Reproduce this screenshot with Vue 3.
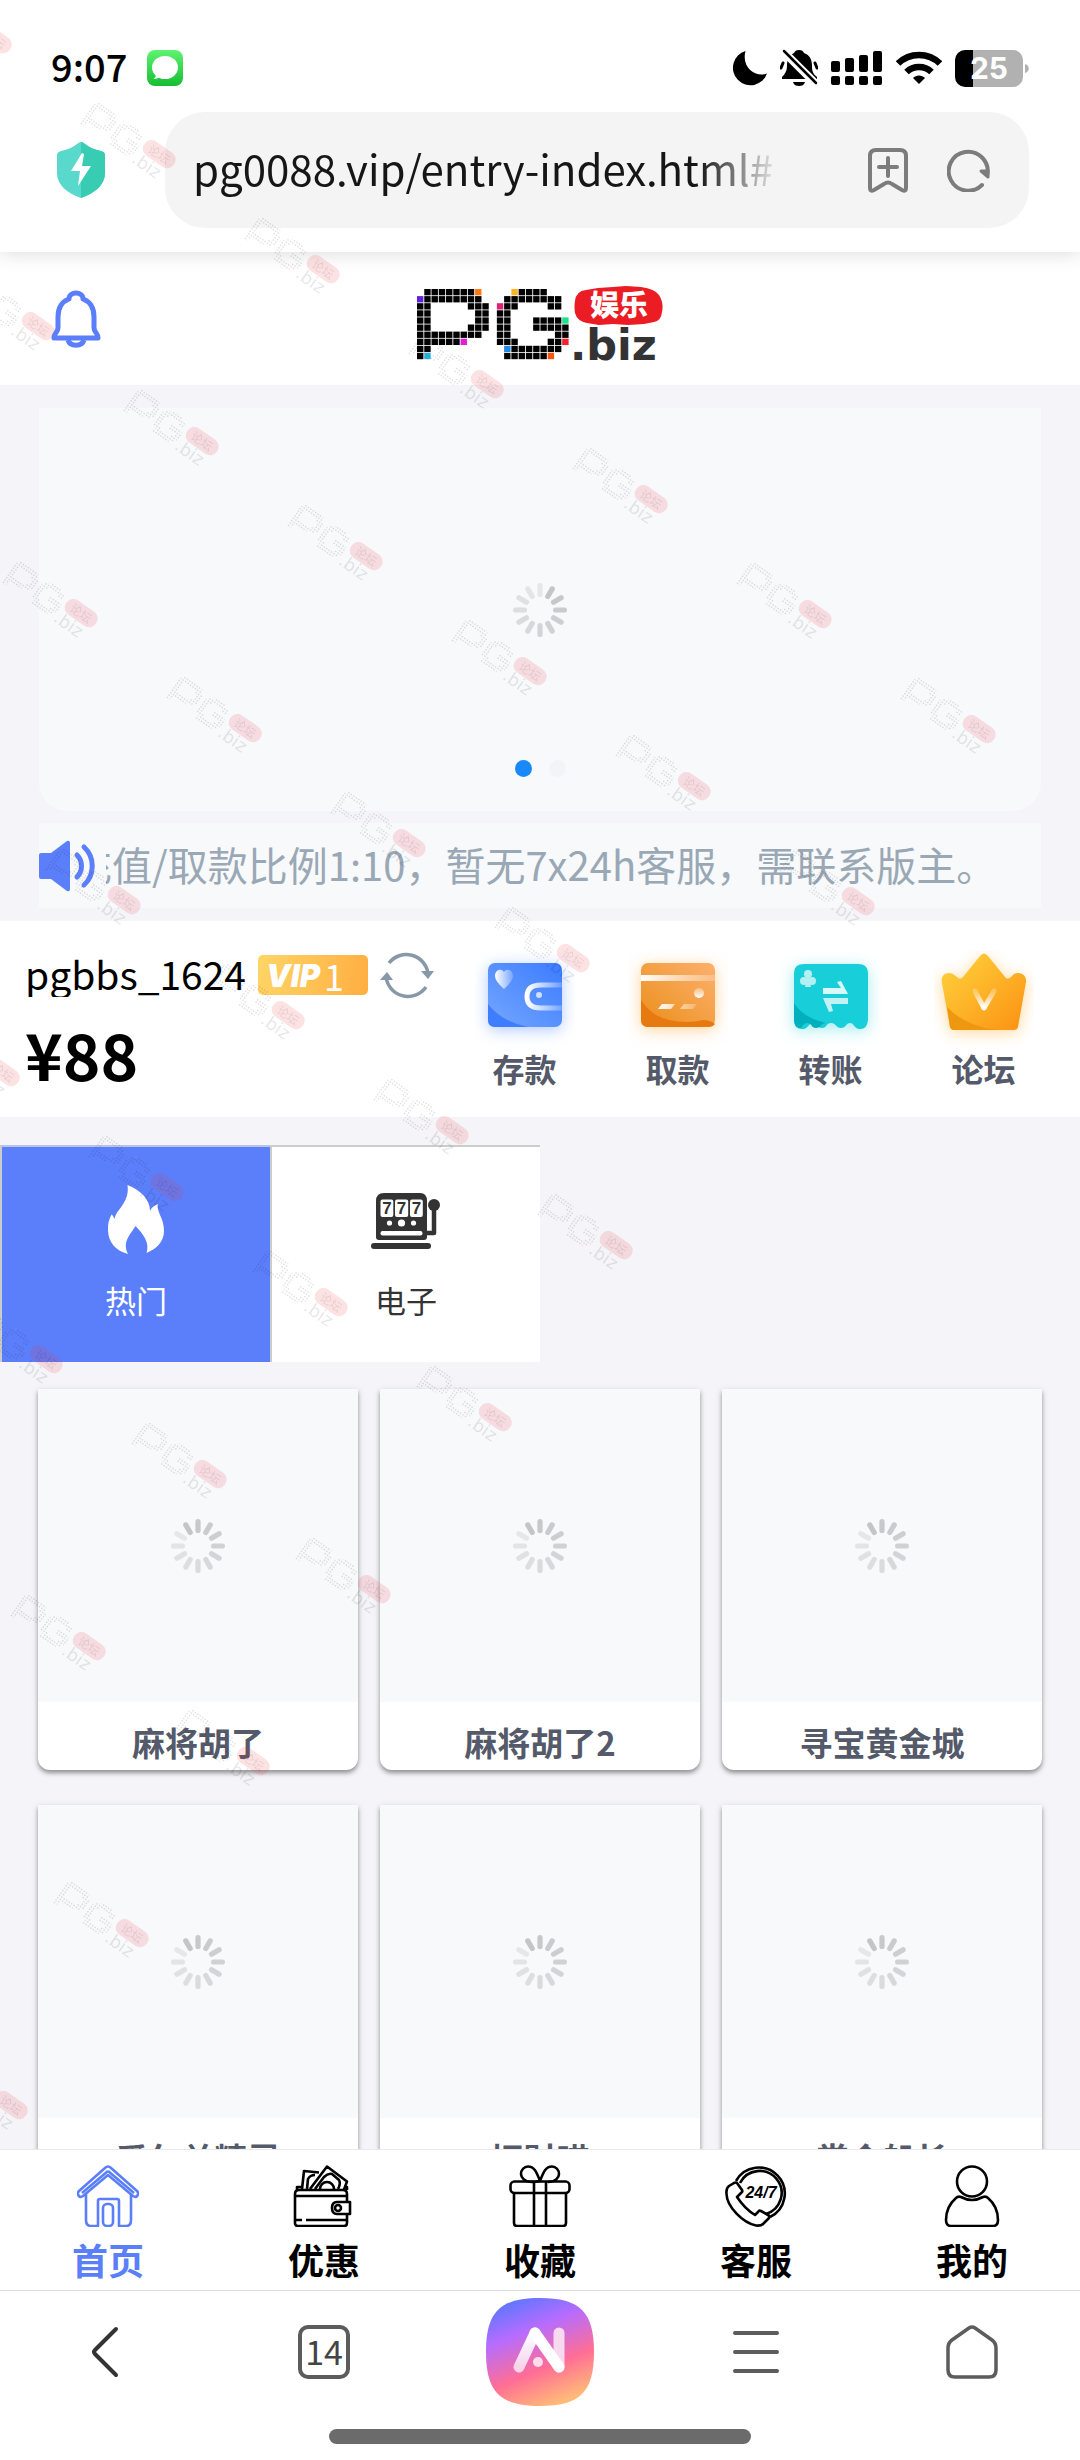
<script setup>
import { computed, ref } from "vue";

const url = ref("pg0088.vip/entry-index.html#");
const notice = "充值/取款比例1:10，暂无7x24h客服，需联系版主。";
const activeTab = ref("hot");
const activeNav = ref("home");

const actions = [
  { key: "deposit", label: "存款" },
  { key: "withdraw", label: "取款" },
  { key: "transfer", label: "转账" },
  { key: "forum", label: "论坛" },
];

const tabs = [
  { key: "hot", label: "热门" },
  { key: "slot", label: "电子" },
];

const games = ["麻将胡了", "麻将胡了2", "寻宝黄金城", "爱尔兰精灵", "招财喵", "赏金船长"];

const navs = [
  { key: "home", label: "首页" },
  { key: "promo", label: "优惠" },
  { key: "favorite", label: "收藏" },
  { key: "service", label: "客服" },
  { key: "mine", label: "我的" },
];

// logo 像素点阵
const logoRows = [
  ".kkkkkkko....ykkkk...",
  "ukkkkkkkk...kkkkkkkk.",
  "kk.....kkk.pkk....kk.",
  "kk......kk.kk........",
  "kk......kk.kk...kkkkg",
  "kk.....kkk.kk...kkkkk",
  "kkkkkkkkk..kk......kk",
  "kkkkkkm....kkk....kkr",
  "kk..........bkkkkkkk.",
  "kc..........kkkkkkv..",
];
const palette = {
  k: "#000",
  o: "#ff7a12",
  y: "#fbb425",
  u: "#5f22dd",
  p: "#dc2374",
  g: "#1fe08c",
  m: "#dd22d2",
  r: "#f3202f",
  b: "#2287e0",
  c: "#25b4dc",
  v: "#f9550f",
};
const cells = computed(() =>
  logoRows.flatMap((row, y) =>
    [...row]
      .map((c, x) => ({ x: x * 7.26, y: 3 + y * 7.1, fill: palette[c] }))
      .filter((c) => c.fill),
  ),
);

// 水印行：[列起, 列止, 行]
const markRows = [
  [-2, 4, -1],
  [-1, 4, 0],
  [0, 3, 1],
  [1, 4, 2],
  [1, 4, 3],
  [2, 4, 4],
  [3, 4, 5],
  [4, 4, 6],
  [4, 4, 7],
];
const marks = markRows.flatMap(([from, to, j]) =>
  Array.from({ length: to - from + 1 }, (_, n) => ({
    x: 140 + (from + n) * 164 - j * 121,
    y: 387 + (from + n) * 115 + j * 172,
  })),
);

function bars(start) {
  return Array.from({ length: 12 }, (_, i) => ({
    angle: start + i * 30,
    opacity: 1 - i * 0.06,
  }));
}
const bannerBars = bars(30);
const gameBars = bars(-30);
</script>

<template>
  <div class="page">
    <div class="browser-top">
      <div class="status">
        <div class="status-left">
          <span class="time">9:07</span>
          <svg width="36" height="36" viewBox="0 0 36 36">
            <defs>
              <linearGradient id="msg" x1="0" y1="0" x2="0" y2="1">
                <stop offset="0" stop-color="#5ff372" />
                <stop offset="1" stop-color="#16bd31" />
              </linearGradient>
            </defs>
            <rect width="36" height="36" rx="8" fill="url(#msg)" />
            <ellipse cx="18" cy="17.500" rx="13" ry="11.500" fill="#fff" />
            <path d="M9 24c0 3-1 4-3 5 4 0 6-1 8-3z" fill="#fff" />
          </svg>
        </div>
        <div class="status-right">
          <svg width="35" height="36" viewBox="0 0 35 36">
            <path d="M13.500 1A17.500 17.500 0 1 0 35 23.500C24 28 9 18 13.500 1z" />
          </svg>
          <svg width="38" height="38" viewBox="0 0 38 38">
            <path d="M19 1c3 0 4 1 5 3 6 2 8 7 8 13 0 5 1 8 5 11v2H2v-2c3-3 5-6 5-11 0-6 2-11 7-13 1-2 2-3 5-3z" />
            <path d="M13 33h12c-1 3-3 4-6 4s-5-1-6-4z" />
            <path d="M3 14l-2 5M35 14l2 5" stroke="#000" stroke-width="3" stroke-linecap="round" />
            <path d="M2 1l34 34" stroke="#fff" stroke-width="8" />
            <path d="M4 2l32 32" stroke="#000" stroke-width="2.500" stroke-linecap="round" />
          </svg>
          <svg width="52" height="36" viewBox="0 0 52 36">
            <rect x="0" y="11" width="9" height="11" rx="2" />
            <rect x="14" y="8" width="9" height="14" rx="2" />
            <rect x="28" y="5" width="9" height="17" rx="2" />
            <rect x="42" y="1" width="9" height="21" rx="2" />
            <rect v-for="x in [0, 14, 28, 42]" :key="x" :x="x" y="26" width="9" height="9" rx="2" />
          </svg>
          <svg width="46" height="36" viewBox="0 0 46 36">
            <g fill="none" stroke="#000" stroke-width="6.500">
              <path d="M2 13.500a30 30 0 0 1 42 0" />
              <path d="M10.500 22a18 18 0 0 1 25 0" />
            </g>
            <path d="M23 34l-6-6c3-3.500 9-3.500 12 0z" />
          </svg>
          <svg width="74" height="37" viewBox="0 0 74 37">
            <path d="M10 0h48a10 10 0 0 1 10 10v17a10 10 0 0 1-10 10H18V0z" fill="#b1b1b1" />
            <path d="M10 0h8v37h-8A10 10 0 0 1 0 27V10A10 10 0 0 1 10 0z" />
            <path d="M70 14c5 1 5 8 0 9z" fill="#b1b1b1" />
            <text class="battery-text" x="34" y="29" text-anchor="middle">25</text>
          </svg>
        </div>
      </div>
      <div class="address">
        <button type="button" class="shield" aria-label="安全">
          <svg width="48" height="56" viewBox="0 0 48 56">
            <path d="M24 0q2 0 4 2 6 5 16 7 4 1 4 4v18c0 12-10 20-24 25C10 51 0 43 0 31V13q0-3 4-4 10-2 16-7 2-2 4-2z" fill="#59d9cb" />
            <path d="M24 0q2 0 4 2 6 5 16 7 4 1 4 4v18c0 12-10 20-24 25z" fill="#38cdb2" />
            <path d="M25 11L14 29h9l-2 15 13-20h-9l2-12z" fill="#fff" />
          </svg>
        </button>
        <div class="url-bar">
          <input v-model="url" class="url" type="text" aria-label="网址" />
          <button type="button" aria-label="收藏网址">
            <svg width="42" height="46" viewBox="0 0 42 46" class="line-gray">
              <path d="M3 41V9q0-6 6-6h24q6 0 6 6v32q0 4-4 2l-10-6q-4-3-8 0l-10 6q-4 2-4-2zM21 11v18M12 20h18" />
            </svg>
          </button>
          <button type="button" aria-label="刷新">
            <svg width="44" height="44" viewBox="0 0 44 44" class="line-gray">
              <path d="M35 37a19.500 19.500 0 1 1 5.500-11" />
              <path d="M34 23h7v6z" fill="#7c7c7c" stroke-linejoin="round" stroke-width="3" />
            </svg>
          </button>
        </div>
      </div>
    </div>

    <main class="content">
      <header class="header">
        <button type="button" class="bell" aria-label="消息">
          <svg width="50" height="58" viewBox="0 0 50 58" fill="none" stroke="#5b7ffb" stroke-width="5" stroke-linejoin="round">
            <path d="M18 9c0-8 14-8 14 0 8 3 11 9 11 18v11c0 4 4 5 4 10H3c0-5 4-6 4-10V27C7 18 10 12 18 9z" />
            <path d="M17 50c2 7 14 7 16 0" />
          </svg>
        </button>
        <svg class="logo" width="246" height="76" viewBox="0 0 246 76" role="img" aria-label="PG娱乐.biz">
          <rect v-for="(c, i) in cells" :key="i" :x="c.x" :y="c.y" width="6.400" height="6.300" :fill="c.fill" />
          <path
            d="M158 15q1-10 11-11l12-2 15-1 13-1 15 1q14 2 18 8 5 8 3 17-1 9-8 10l-10 2-16 1-15-1-14 1-12-2q-10-2-12-10-1-6 0-12z"
            fill="#ec1c24"
          />
          <text class="logo-seal" x="202" y="30" text-anchor="middle">娱乐</text>
          <text class="logo-domain" x="153" y="74">.biz</text>
        </svg>
      </header>

      <section class="banner">
        <svg width="54" height="54" viewBox="-27 -27 54 54" class="spinner">
          <rect v-for="b in bannerBars" :key="b.angle" x="-2.600" y="-27" width="5.200" height="14" rx="2.600" :opacity="b.opacity" :transform="`rotate(${b.angle})`" />
        </svg>
        <div class="dots"><i class="on"></i><i></i></div>
      </section>

      <div class="notice">
        <svg width="56" height="52" viewBox="0 0 56 52">
          <path d="M2 13h10L28 1q3-1 3 2v46q0 3-3 2L12 39H2q-2 0-2-2V15q0-2 2-2z" fill="#5b7ffb" />
          <g fill="none" stroke="#5b7ffb" stroke-width="5" stroke-linecap="round">
            <path d="M38 15c6 6 6 16 0 22" />
            <path d="M45 7c11 10 11 28 0 38" />
          </g>
        </svg>
        <p class="notice-text">{{ notice }}</p>
      </div>

      <section class="wallet">
        <div class="account">
          <div class="account-row">
            <span class="name">pgbbs_1624</span>
            <span class="vip"><b>VIP</b>1</span>
            <button type="button" class="sync" aria-label="刷新余额">
              <svg width="54" height="52" viewBox="0 0 54 52">
                <g fill="none" stroke="#8798a8" stroke-width="3.500">
                  <path d="M9 14a22 22 0 0 1 39 10" />
                  <path d="M46 38A22 22 0 0 1 6 27" />
                </g>
                <path d="M41 22h13l-6 8zM0 31h13L7 23z" fill="#8798a8" />
              </svg>
            </button>
          </div>
          <div class="balance">¥88</div>
        </div>
        <div class="actions">
          <button v-for="a in actions" :key="a.key" type="button" class="action">
            <svg v-if="a.key === 'deposit'" width="100" height="100" viewBox="0 0 100 100">
              <defs>
                <linearGradient id="blue" x1="0" y1="1" x2="1" y2="0">
                  <stop offset="0" stop-color="#75a7ff" />
                  <stop offset="1" stop-color="#3b7bff" />
                </linearGradient>
                <linearGradient id="shine">
                  <stop offset="0" stop-color="#fff" />
                  <stop offset="1" stop-color="#fff" stop-opacity="0.2" />
                </linearGradient>
                <linearGradient id="shineUp" x1="0" y1="1" x2="0" y2="0">
                  <stop offset="0" stop-color="#fff" />
                  <stop offset="1" stop-color="#fff" stop-opacity="0.25" />
                </linearGradient>
              </defs>
              <g class="glow-blue">
                <rect x="13" y="13" width="74" height="64" rx="7" fill="url(#blue)" />
              </g>
              <path d="M13 54q14 18 40 23H20q-7 0-7-7z" fill="#3f7dff" />
              <path d="M87 35H66q-14 0-14 11.500T66 58h21" fill="none" stroke="url(#shine)" stroke-width="5" />
              <circle cx="64" cy="45" r="3" fill="#cfe0ff" />
              <path d="M29 39q-9-8-9-13c0-7 7-8 9-4 2-4 9-3 9 4q0 5-9 13z" fill="url(#shine)" />
            </svg>
            <svg v-else-if="a.key === 'withdraw'" width="100" height="100" viewBox="0 0 100 100">
              <defs>
                <linearGradient id="orange" x1="0" y1="1" x2="1" y2="0">
                  <stop offset="0" stop-color="#ea8f1a" />
                  <stop offset="1" stop-color="#fdb06e" />
                </linearGradient>
              </defs>
              <g class="glow-orange">
                <rect x="13" y="13" width="74" height="64" rx="7" fill="url(#orange)" />
              </g>
              <path d="M13 50q10 16 28 20t34 0q7 0 12 4-2 3-7 3H20q-7 0-7-7z" fill="#e67a10" />
              <path d="M13 25h74v6H13z" fill="url(#shine)" />
              <circle cx="71" cy="43" r="5" fill="url(#shineUp)" />
              <path d="M34 54h13l-4 5H30zM56 54h13l-4 5H52z" fill="url(#shine)" />
            </svg>
            <svg v-else-if="a.key === 'transfer'" width="100" height="100" viewBox="0 0 100 100">
              <g class="glow-cyan">
                <path
                  d="M23 14h54q10 0 10 9v47q-1 10-9 9c-5-1-5-6-9-6s-4 5-9 5-5-5-10-5-4 5-9 5-5-5-9-5-5 5-9 6q-10 1-10-9V23q0-9 10-9z"
                  fill="#18cfd9"
                />
              </g>
              <path d="M13 53q8 14 32 20c-5 0-5 5-10 5s-4-5-9-5q-3 0-6 5-6 1-7-8z" fill="#02b0bd" />
              <path d="M42 38h18l-4-6 4-1 7 13H42z" fill="#d9f8fa" />
              <path d="M67 48H42l6 14 4-1-2-7h17z" fill="#c2f2f5" />
              <g fill="#b4f0f3">
                <circle cx="27" cy="24" r="4" />
                <circle cx="23" cy="31" r="4" />
                <circle cx="31" cy="31" r="4" />
                <path d="M26 27h2l2 10h-6z" />
              </g>
            </svg>
            <svg v-else width="100" height="100" viewBox="0 0 100 100">
              <defs>
                <linearGradient id="gold" x1="0" y1="0" x2="1" y2="1">
                  <stop offset="0" stop-color="#ffd43d" />
                  <stop offset="1" stop-color="#fc9113" />
                </linearGradient>
              </defs>
              <g class="glow-gold">
                <path
                  d="M46 6q4-5 8 0l17 21q2 3 6 0l3-3c6-3 13 1 12 8l-8 45q-1 3-4 3H20q-3 0-4-3L8 33c-2-8 5-12 11-9l4 3q3 3 6 0z"
                  fill="url(#gold)"
                />
              </g>
              <path d="M13 57q18 19 50 23H20q-3 0-4-3z" fill="#ee980f" />
              <path d="M41 41l9 17 10-17" fill="none" stroke="url(#shineUp)" stroke-width="5" stroke-linecap="round" stroke-linejoin="round" />
            </svg>
            <span>{{ a.label }}</span>
          </button>
        </div>
      </section>

      <div class="tabs">
        <button
          v-for="t in tabs"
          :key="t.key"
          type="button"
          class="tab"
          :class="{ active: activeTab === t.key }"
          @click="activeTab = t.key"
        >
          <svg v-if="t.key === 'hot'" width="56" height="70" viewBox="0 0 56 70">
            <path
              d="M19.500 0C32 5 42 14 42 25.700q2-4 7.700-6.700c-1 9 6.300 14 6.300 27 0 11-8 18-17.400 22C42 57 35 49 27.500 41 22 50 14 57 20 69 8 66 0 57 0 45c0-7 1-11 3.800-15.700 1 2 2.500 3 2.700 5C8 24 22 18 19.500 0z"
              fill="currentColor"
            />
          </svg>
          <svg v-else width="70" height="70" viewBox="0 -8 70 70" fill="currentColor">
            <path d="M13 0h36q7 0 7 8v36q0 3-3 3H8q-3 0-3-3V8q0-8 8-8z" />
            <rect x="0" y="50" width="60" height="6" rx="3" />
            <circle cx="63" cy="12" r="6" />
            <path d="M63 14v26h-8" fill="none" stroke="currentColor" stroke-width="4.500" stroke-linejoin="round" />
            <g fill="#fff">
              <rect x="9.500" y="6.500" width="12.800" height="17.500" rx="2" />
              <rect x="24" y="6.500" width="13.200" height="17.500" rx="2" />
              <rect x="39" y="6.500" width="12.800" height="17.500" rx="2" />
              <circle cx="18.500" cy="30" r="2.600" />
              <circle cx="30.500" cy="30" r="3.600" />
              <circle cx="42.500" cy="30" r="2.600" />
              <rect x="9.500" y="38" width="42" height="4.500" rx="2" />
            </g>
            <g class="slot-digit" text-anchor="middle">
              <text x="16" y="21">7</text>
              <text x="30.600" y="21">7</text>
              <text x="45.400" y="21">7</text>
            </g>
          </svg>
          <span>{{ t.label }}</span>
        </button>
      </div>

      <section class="games">
        <a v-for="g in games" :key="g" href="#" class="game">
          <span class="cover">
            <svg width="54" height="54" viewBox="-27 -27 54 54" class="spinner">
              <rect v-for="b in gameBars" :key="b.angle" x="-2.600" y="-27" width="5.200" height="14" rx="2.600" :opacity="b.opacity" :transform="`rotate(${b.angle})`" />
            </svg>
          </span>
          <span class="game-name">{{ g }}</span>
        </a>
      </section>
    </main>

    <nav class="navbar">
      <a
        v-for="n in navs"
        :key="n.key"
        href="#"
        class="nav"
        :class="{ active: activeNav === n.key }"
        @click.prevent="activeNav = n.key"
      >
        <svg width="62" height="62" viewBox="0 0 62 62" fill="none" stroke="currentColor" stroke-width="2.600" stroke-linejoin="round">
          <g v-if="n.key === 'home'">
            <path d="M31 1.500q1.500 0 3 1.500l26 23q2 2 .5 4.500t-4.500.5L31 10 6 31q-3 2-4.500-.5T2 26L28 3q1.500-1.500 3-1.500z" />
            <path d="M31 6L5 28M31 6l26 22" />
            <path d="M9 29v26q0 6 5 6h7V36q0-2 2-2h17q2 0 2 2v25h7q5 0 5-6V29" />
            <rect x="26" y="39" width="10" height="22" rx="4" />
          </g>
          <g v-else-if="n.key === 'promo'">
            <path d="M6 25h44q4 0 4 4v29q0 3-3 3H5q-3 0-3-3V29q0-4 4-4zM2 31h52M2 55h7M13 55h41M4 25v-3h5M54 25v-3h-3" />
            <path d="M9 24l2-18 15 1.500M14 24l1-10q2-4 7-4M17 24L34 1.500l20 15-3 8M22 24l9-12q4-4 8-3l7 6q2 4-1 9" />
            <path d="M27 24a7 7 0 0 1 14 0" />
            <path d="M57 37H44q-5 0-5 6t5 6h13z" fill="#fff" />
            <circle cx="45" cy="43" r="3" />
          </g>
          <g v-else-if="n.key === 'favorite'">
            <rect x="1.500" y="16.500" width="59" height="11.500" rx="4" />
            <path d="M5 28v30q0 3 3 3h46q3 0 3-3V28M25 17v44M37 17v44" />
            <path d="M31 16c-3 0-4 1-8 1-8 0-11-5-11-8 0-4 3-7.500 7-7.500 7 0 9 7 12 14.500 3-7.500 5-14.500 12-14.500 4 0 7 3.500 7 7.500 0 3-3 8-11 8" />
          </g>
          <g v-else-if="n.key === 'service'">
            <path d="M11 16A26 26 0 1 1 45 52" />
            <path d="M15 18A22 22 0 1 1 41 49" />
            <path d="M9 18l-5 3q-3 2-2.500 8C2 42 18 58 31 60.500q5 .5 7-1.500l6-6q1-2-1-3l-7-4q-2-1-3 1l-3 3Q20 44 12 32l4-4q2-1 1-3l-5-7q-1-1-3 0z" fill="#fff" />
            <text class="service-text" x="36" y="33" text-anchor="middle" fill="currentColor" stroke="none">24/7</text>
          </g>
          <g v-else>
            <circle cx="31" cy="16.500" r="15" />
            <path d="M15 33q2-2 5-1 11 6 22 0 3-1 5 1c7 6 10 15 10 22q0 6-5 6H10q-5 0-5-6c0-7 3-16 10-22z" />
          </g>
        </svg>
        <span>{{ n.label }}</span>
      </a>
    </nav>

    <footer class="browser-bottom">
      <div class="tools">
        <button type="button" aria-label="返回">
          <svg width="50" height="54" viewBox="0 0 50 54" fill="none" stroke="#333" stroke-width="4" stroke-linecap="round" stroke-linejoin="round">
            <path d="M33 4L12 25q-2 2 0 4l21 21" />
          </svg>
        </button>
        <button type="button" class="tab-count"><span>14</span></button>
        <button type="button" aria-label="AI">
          <svg width="108" height="108" viewBox="0 0 108 108">
            <defs>
              <linearGradient id="ai" x1="0.200" y1="0" x2="0.600" y2="1">
                <stop offset="0" stop-color="#5578ff" />
                <stop offset="0.320" stop-color="#b66cff" />
                <stop offset="0.680" stop-color="#ff6e95" />
                <stop offset="1" stop-color="#ffba78" />
              </linearGradient>
              <linearGradient id="aiLeg" x1="0" y1="0" x2="0" y2="1">
                <stop offset="0" stop-color="#fff" />
                <stop offset="1" stop-color="#fff" stop-opacity="0.700" />
              </linearGradient>
            </defs>
            <path d="M54 0C94 0 108 14 108 54s-14 54-54 54S0 94 0 54 14 0 54 0z" fill="url(#ai)" />
            <g fill="none" stroke-width="11" stroke-linecap="round">
              <path d="M49 35L33 69" stroke="url(#aiLeg)" />
              <path d="M73 35v34" stroke="#f8daf0" />
              <path d="M49 35l24 34" stroke="#fff" />
            </g>
            <circle cx="52" cy="64" r="5" fill="#ffdcea" />
          </svg>
        </button>
        <button type="button" aria-label="菜单">
          <svg width="50" height="54" viewBox="0 0 50 54" stroke="#5c5c5c" stroke-width="4" stroke-linecap="round">
            <path d="M4 8h42M4 27h42M4 46h42" />
          </svg>
        </button>
        <button type="button" aria-label="主页">
          <svg width="52" height="54" viewBox="0 0 52 54" fill="none" stroke="#5c5c5c" stroke-width="3.500" stroke-linejoin="round">
            <path d="M23 3q3-2 6 0l17 12q4 3 4 8v22q0 7-7 7H9q-7 0-7-7V23q0-5 4-8z" />
          </svg>
        </button>
      </div>
      <div class="home-bar"></div>
    </footer>

    <svg class="watermark" width="100%" height="100%" aria-hidden="true">
      <g v-for="(m, i) in marks" :key="i" :transform="`translate(${m.x} ${m.y}) rotate(35) scale(0.41)`">
        <g opacity="0.120">
          <rect v-for="(c, k) in cells" :key="k" :x="c.x" :y="c.y" width="3.500" height="3.500" :fill="c.fill" />
        </g>
        <rect x="156" y="0" width="88" height="42" rx="20" fill="#f03040" opacity="0.140" />
        <g opacity="0.090">
          <text class="logo-seal mark-seal" x="200" y="33" text-anchor="middle">论坛</text>
          <text class="logo-domain mark-domain" x="153" y="76">.biz</text>
        </g>
      </g>
    </svg>
  </div>
</template>

<style>
body {
  margin: 0;
}
</style>

<style scoped>
.page {
  position: relative;
  display: flex;
  flex-direction: column;
  height: 100vh;
  overflow: hidden;
  background: #f4f4f9;
  color: #000;
  font-family: "Noto Sans CJK SC", "Noto Sans", sans-serif;
}
button {
  display: flex;
  align-items: center;
  justify-content: center;
  padding: 0;
  border: 0;
  background: none;
  color: inherit;
  font: inherit;
}
a {
  color: inherit;
  text-decoration: none;
}
svg {
  display: block;
  flex-shrink: 0;
}

/* 浏览器顶部 */
.browser-top {
  position: relative;
  z-index: 1;
  flex-shrink: 0;
  padding-bottom: 24px;
  background: #fff;
  box-shadow: 0 0 20px rgba(0, 0, 0, 0.16);
}
.status {
  display: flex;
  align-items: center;
  justify-content: space-between;
  box-sizing: border-box;
  height: 112px;
  padding: 24px 51px 0 51px;
}
.status-left {
  display: flex;
  align-items: center;
  gap: 20px;
}
.time {
  font-size: 38px;
  line-height: 40px;
  padding-bottom: 4px;
  font-weight: 500;
}
.status-right {
  display: flex;
  align-items: center;
  gap: 13px;
}
.battery-text {
  fill: #fff;
  font: bold 30px Inter, sans-serif;
}
.address {
  display: flex;
  align-items: center;
  padding-right: 51px;
}
.shield {
  width: 165px;
  padding-right: 3px;
}
.url-bar {
  display: flex;
  flex: 1;
  align-items: center;
  gap: 38px;
  min-width: 0;
  height: 116px;
  padding: 0 38px 0 28px;
  border-radius: 40px;
  background: #f4f4f4;
}
.url {
  flex: 1;
  min-width: 0;
  height: 64px;
  margin-right: 48px;
  padding: 0 0 6px;
  border: 0;
  outline: 0;
  background: none;
  color: #161616;
  font: 42px "Noto Sans CJK SC", sans-serif;
  -webkit-mask-image: linear-gradient(90deg, #000 86%, transparent);
  mask-image: linear-gradient(90deg, #000 86%, transparent);
}
.line-gray {
  fill: none;
  stroke: #7c7c7c;
  stroke-width: 4;
  stroke-linecap: round;
  stroke-linejoin: round;
}

/* 内容 */
.content {
  flex: 1;
  min-height: 0;
  overflow: hidden;
}
.header {
  display: grid;
  grid-template-columns: 1fr auto 1fr;
  align-items: center;
  height: 133px;
  background: #fff;
}
.bell {
  justify-self: start;
  margin-left: 51px;
}
.logo {
  margin-top: 10px;
}
.logo-seal {
  fill: #fff;
  font-size: 29px;
  font-weight: 900;
}
.logo-domain {
  fill: #333;
  font: bold 43px "DejaVu Sans", sans-serif;
}
.banner {
  position: relative;
  display: flex;
  align-items: center;
  justify-content: center;
  height: 403px;
  margin: 23px 39px 12px;
  border-radius: 0 0 28px 28px;
  background: #f7f9fb;
}
.spinner {
  fill: #c3c5c7;
}
.dots {
  position: absolute;
  bottom: 34px;
  left: 0;
  right: 0;
  display: flex;
  justify-content: center;
  gap: 17px;
}
.dots i {
  width: 17px;
  height: 17px;
  border-radius: 50%;
  background: #f3f4f8;
}
.dots .on {
  background: #1989fa;
}
.notice {
  display: flex;
  align-items: center;
  gap: 11px;
  height: 85px;
  margin: 0 39px 13px;
  background: #f7f9fb;
}
.notice-text {
  flex: 1;
  margin: 0;
  padding-bottom: 4px;
  overflow: hidden;
  color: #9aa8b5;
  font-size: 40px;
  line-height: 60px;
  white-space: nowrap;
  text-indent: -34px;
}

.wallet {
  display: flex;
  justify-content: space-between;
  height: 196px;
  padding: 0 20px 0 25px;
  background: #fff;
}
.account {
  padding-top: 28px;
}
.account-row {
  display: flex;
  align-items: center;
  height: 52px;
}
.name {
  align-self: flex-start;
  height: 48px;
  margin-right: 12px;
  overflow: hidden;
  font-size: 39px;
  line-height: 48px;
}
.vip {
  display: flex;
  align-items: center;
  box-sizing: border-box;
  width: 110px;
  height: 40px;
  margin-right: 12px;
  padding-left: 8px;
  border-radius: 5px;
  background: linear-gradient(100deg, #ffd566, #ffae42);
  color: #fff;
  font-size: 36px;
  line-height: 36px;
}
.vip b {
  margin-right: 4px;
  font: italic 900 31px Inter, sans-serif;
}
.balance {
  margin-top: 17px;
  font-size: 64px;
  line-height: 70px;
  font-weight: 700;
}
.actions {
  display: grid;
  grid-template-columns: repeat(4, 153px);
}
.action {
  flex-direction: column;
  justify-content: flex-start;
  padding-top: 29px;
  color: #545a69;
  font-size: 32px;
  line-height: 36px;
  font-weight: 700;
}
.glow-blue {
  filter: drop-shadow(0 3px 8px rgba(59, 123, 255, 0.4));
}
.glow-orange {
  filter: drop-shadow(0 3px 8px rgba(255, 170, 60, 0.5));
}
.glow-cyan {
  filter: drop-shadow(0 3px 8px rgba(24, 207, 217, 0.4));
}
.glow-gold {
  filter: drop-shadow(0 3px 8px rgba(255, 170, 40, 0.45));
}

.tabs {
  display: grid;
  grid-template-columns: repeat(4, 1fr);
  margin: 28px 0 27px;
}
.tab {
  flex-direction: column;
  justify-content: flex-start;
  gap: 24px;
  box-sizing: border-box;
  height: 217px;
  padding-top: 38px;
  border-top: 2px solid #ccc;
  border-left: 2px solid #ccc;
  background: #fff;
  color: #333;
  font-size: 31px;
  line-height: 42px;
}
.tab.active {
  border-top-color: #b9c3e6;
  background: #5b7ffb;
  color: #fff;
}
.slot-digit {
  fill: #333;
  font: bold 17px "Liberation Sans", sans-serif;
}

.games {
  display: grid;
  grid-template-columns: repeat(3, 1fr);
  gap: 35px 22px;
  padding: 0 38px;
}
.game {
  display: block;
  overflow: hidden;
  border-radius: 0 0 12px 12px;
  background: #fff;
  box-shadow: 0 3px 4px rgba(0, 0, 0, 0.35), 0 2px 8px rgba(0, 0, 0, 0.1);
}
.cover {
  display: flex;
  align-items: center;
  justify-content: center;
  aspect-ratio: 320 / 313;
  background: #f7f9fb;
}
.game-name {
  display: block;
  padding: 18px 0 6px;
  color: #545a69;
  font-size: 33px;
  line-height: 44px;
  font-weight: 700;
  text-align: center;
}

/* 底部导航 */
.navbar {
  display: grid;
  grid-template-columns: repeat(5, 1fr);
  flex-shrink: 0;
  box-sizing: border-box;
  height: 141px;
  border-top: 1px solid #e9eaf1;
  background: #fff;
}
.nav {
  display: flex;
  flex-direction: column;
  align-items: center;
  gap: 10px;
  padding-top: 15px;
  font-size: 36px;
  line-height: 44px;
  font-weight: 700;
}
.nav.active {
  color: #5b7ffb;
}
.service-text {
  font: bold italic 16px "Liberation Sans", sans-serif;
}
.browser-bottom {
  flex-shrink: 0;
  padding-bottom: 16px;
  border-top: 1px solid #dedede;
  background: #fff;
}
.tools {
  display: grid;
  grid-template-columns: repeat(5, 1fr);
  height: 122px;
}
.tab-count span {
  box-sizing: border-box;
  width: 52px;
  height: 54px;
  border: 4px solid #5c5c5c;
  border-radius: 10px;
  color: #444;
  font-size: 34px;
  line-height: 44px;
}
.home-bar {
  width: 39%;
  height: 15px;
  margin: 16px auto 0;
  border-radius: 8px;
  background: #6b6b6b;
}

.watermark {
  position: absolute;
  inset: 0;
  z-index: 2;
  pointer-events: none;
}
.mark-seal {
  fill: #000;
  font-weight: 400;
}
.mark-domain {
  fill: #000;
  font-weight: 400;
}
</style>
